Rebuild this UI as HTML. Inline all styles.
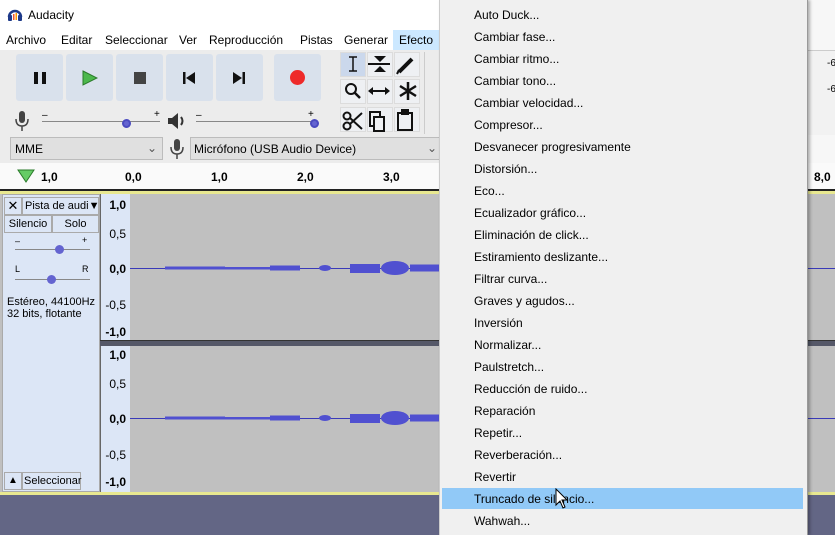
<!DOCTYPE html>
<html><head><meta charset="utf-8"><style>
*{margin:0;padding:0;box-sizing:border-box}
body{width:835px;height:535px;overflow:hidden;position:relative;background:#f0f0f0;font-family:"Liberation Sans",sans-serif;font-size:12px;color:#000}
.a{position:absolute}
.btn{position:absolute;top:54px;width:47px;height:47px;background:#d9e1ec;border-radius:3px}
.mi{position:absolute;left:474px;font-size:12px;color:#000}
.tool{position:absolute;width:26px;height:25px;background:#eef0f3;border:1px solid #dcdcdc}
.sc{position:absolute;left:100px;width:30px;text-align:right;padding-right:4px;font-size:12px}
</style></head><body>
<div class="a" style="left:0;top:0;width:835px;height:30px;background:#fff"></div>
<svg class="a" style="left:7px;top:7px" width="16" height="14"><path d="M2 10 A6 6 0 0 1 14 10" fill="none" stroke="#1e3a8a" stroke-width="2.5"/><rect x="1" y="8" width="4" height="6" rx="1" fill="#1e3a8a"/><rect x="11" y="8" width="4" height="6" rx="1" fill="#1e3a8a"/><rect x="6" y="7" width="1.5" height="6" fill="#e53"/><rect x="8.5" y="6" width="1.5" height="7" fill="#f90"/></svg>
<div class="a" style="left:28px;top:8px;font-size:12px">Audacity</div>
<div class="a" style="left:0;top:30px;width:440px;height:20px;background:#fff"></div>
<div class="a" style="left:393px;top:30px;width:46px;height:20px;background:#cce8ff"></div>
<div class="a" style="left:6px;top:33px">Archivo</div>
<div class="a" style="left:61px;top:33px">Editar</div>
<div class="a" style="left:105px;top:33px">Seleccionar</div>
<div class="a" style="left:179px;top:33px">Ver</div>
<div class="a" style="left:209px;top:33px">Reproducción</div>
<div class="a" style="left:300px;top:33px">Pistas</div>
<div class="a" style="left:344px;top:33px">Generar</div>
<div class="a" style="left:399px;top:33px">Efecto</div>
<div class="a" style="left:0;top:50px;width:440px;height:113px;background:#ececec"></div>
<div class="btn" style="left:16px"></div><div class="btn" style="left:66px"></div><div class="btn" style="left:116px"></div><div class="btn" style="left:166px"></div><div class="btn" style="left:216px"></div><div class="btn" style="left:274px"></div>
<div class="a" style="left:34px;top:72px;width:4px;height:12px;background:#111"></div><div class="a" style="left:42px;top:72px;width:4px;height:12px;background:#111"></div>
<svg class="a" style="left:82px;top:70px" width="16" height="16"><path d="M1 1 L15 8 L1 15Z" fill="#4cb84c" stroke="#2a7a2a"/></svg>
<div class="a" style="left:134px;top:72px;width:12px;height:12px;background:#444"></div>
<svg class="a" style="left:182px;top:71px" width="14" height="14"><rect x="1" y="1" width="2.5" height="12" fill="#111"/><path d="M13 1 L4 7 L13 13Z" fill="#111"/></svg>
<svg class="a" style="left:232px;top:71px" width="14" height="14"><path d="M1 1 L10 7 L1 13Z" fill="#111"/><rect x="10.5" y="1" width="2.5" height="12" fill="#111"/></svg>
<div class="a" style="left:290px;top:70px;width:15px;height:15px;border-radius:50%;background:#ee2a2a"></div>
<div class="tool" style="left:340px;top:52px;background:#cbd8ec"></div><div class="tool" style="left:367px;top:52px"></div><div class="tool" style="left:394px;top:52px"></div>
<div class="tool" style="left:340px;top:79px"></div><div class="tool" style="left:367px;top:79px"></div><div class="tool" style="left:394px;top:79px"></div>
<div class="tool" style="left:340px;top:107px"></div><div class="tool" style="left:367px;top:107px"></div><div class="tool" style="left:394px;top:107px"></div>
<svg class="a" style="left:340px;top:52px" width="84" height="82" fill="none" stroke="#111" stroke-width="2">
<path d="M13 5 V19 M9 5 H17 M9 19 H17" stroke-width="1.5"/>
<path d="M28 12 H50" /><path d="M34 4 L46 4 L40 10Z M34 20 L46 20 L40 14Z" fill="#111" stroke="none"/>
<path d="M59 20 L72 7" stroke-width="4"/><path d="M57 22 L59 18" stroke-width="2"/>
<circle cx="11" cy="37" r="5"/><path d="M15 41 L20 46" stroke-width="2.5"/>
<path d="M30 39 H48"/><path d="M28 39 L33 35 L33 43Z M50 39 L45 35 L45 43Z" fill="#111" stroke="none"/>
<path d="M68 30 V48 M60 34 L76 44 M60 44 L76 34" stroke-width="2.5"/>
<circle cx="7" cy="74" r="3.5"/><circle cx="7" cy="64" r="3.5"/><path d="M10 72 L22 61 M10 66 L22 77" stroke-width="2"/>
<rect x="30" y="60" width="10" height="14"/><rect x="34" y="65" width="10" height="14" fill="#eef0f3"/>
<rect x="58" y="61" width="14" height="17"/><rect x="62" y="58" width="6" height="4" fill="#111"/>
</svg>
<div class="a" style="left:424px;top:52px;width:16px;height:82px;background:#ececec;border-left:1px solid #ccc"></div>
<svg class="a" style="left:14px;top:110px" width="16" height="22"><rect x="5" y="1" width="6" height="12" rx="3" fill="#444"/><path d="M2 9 Q2 16 8 16 Q14 16 14 9 M8 16 V21" fill="none" stroke="#444" stroke-width="1.5"/></svg>
<div class="a" style="left:42px;top:121px;width:118px;height:1px;background:#888"></div>
<div class="a" style="left:42px;top:110px;font-size:10px">–</div><div class="a" style="left:154px;top:109px;font-size:10px">+</div>
<div class="a" style="left:122px;top:119px;width:9px;height:9px;border-radius:50%;background:#6464d0;border:2px solid #4a4ac0"></div>
<svg class="a" style="left:167px;top:112px" width="20" height="18"><path d="M1 6 H5 L11 1 V17 L5 12 H1Z" fill="#333"/><path d="M14 5 Q17 9 14 13" stroke="#333" stroke-width="2" fill="none"/></svg>
<div class="a" style="left:196px;top:121px;width:118px;height:1px;background:#888"></div>
<div class="a" style="left:196px;top:110px;font-size:10px">–</div><div class="a" style="left:308px;top:109px;font-size:10px">+</div>
<div class="a" style="left:310px;top:119px;width:9px;height:9px;border-radius:50%;background:#6464d0;border:2px solid #4a4ac0"></div>
<div class="a" style="left:0;top:135px;width:440px;height:28px;background:#ececec"></div>
<div class="a" style="left:10px;top:137px;width:153px;height:23px;background:#e0e0e0;border:1px solid #bcbcbc;padding:4px 4px;font-size:12px">MME<span style="position:absolute;right:5px;top:3px;color:#555">⌄</span></div>
<svg class="a" style="left:170px;top:138px" width="14" height="22"><rect x="4" y="1" width="6" height="12" rx="3" fill="#444"/><path d="M1 9 Q1 16 7 16 Q13 16 13 9 M7 16 V21" fill="none" stroke="#444" stroke-width="1.5"/></svg>
<div class="a" style="left:190px;top:137px;width:250px;height:23px;background:#e0e0e0;border:1px solid #bcbcbc;padding:4px 3px;font-size:12px">Micrófono (USB Audio Device)<span style="position:absolute;right:2px;top:3px;color:#555">⌄</span></div>
<div class="a" style="left:0;top:163px;width:835px;height:28px;background:#fafafa;border-bottom:2px solid #222"></div>
<svg class="a" style="left:17px;top:169px" width="18" height="14"><path d="M1 1 H17 L9 13Z" fill="#6c6" stroke="#2a7a2a"/></svg>
<div class="a" style="left:41px;top:170px;font-weight:bold;font-size:12px">1,0</div>
<div class="a" style="left:125px;top:170px;font-weight:bold">0,0</div>
<div class="a" style="left:211px;top:170px;font-weight:bold">1,0</div>
<div class="a" style="left:297px;top:170px;font-weight:bold">2,0</div>
<div class="a" style="left:383px;top:170px;font-weight:bold">3,0</div>
<div class="a" style="left:814px;top:170px;font-weight:bold">8,0</div>
<div class="a" style="left:0;top:191px;width:835px;height:3px;background:#e8e890"></div>
<div class="a" style="left:0;top:194px;width:835px;height:300px;background:#c0c0c0"></div>
<div class="a" style="left:2px;top:194px;width:98px;height:298px;background:#dce6f6;border:1px solid #aaa"></div>
<div class="a" style="left:100px;top:194px;width:30px;height:298px;background:#dce6f6;border-left:1px solid #666"></div>
<div class="a" style="left:4px;top:197px;width:18px;height:18px;border:1px solid #aaa;text-align:center;font-size:13px;line-height:16px">✕</div>
<div class="a" style="left:22px;top:197px;width:77px;height:18px;border:1px solid #aaa;font-size:11px;padding:2px 2px;overflow:hidden;white-space:nowrap">Pista de audi▼</div>
<div class="a" style="left:4px;top:215px;width:48px;height:18px;border:1px solid #aaa;font-size:11px;text-align:center;padding-top:2px">Silencio</div>
<div class="a" style="left:52px;top:215px;width:47px;height:18px;border:1px solid #aaa;font-size:11px;text-align:center;padding-top:2px">Solo</div>
<div class="a" style="left:15px;top:249px;width:75px;height:1px;background:#888"></div>
<div class="a" style="left:55px;top:245px;width:9px;height:9px;border-radius:50%;background:#6464d0"></div>
<div class="a" style="left:15px;top:236px;font-size:9px">–</div><div class="a" style="left:82px;top:235px;font-size:9px">+</div>
<div class="a" style="left:15px;top:279px;width:75px;height:1px;background:#888"></div>
<div class="a" style="left:47px;top:275px;width:9px;height:9px;border-radius:50%;background:#6464d0"></div>
<div class="a" style="left:15px;top:264px;font-size:9px">L</div><div class="a" style="left:82px;top:264px;font-size:9px">R</div>
<div class="a" style="left:7px;top:296px;font-size:11px;line-height:12px">Estéreo, 44100Hz<br>32 bits, flotante</div>
<div class="a" style="left:4px;top:472px;width:18px;height:18px;border:1px solid #aaa;font-size:10px;text-align:center;line-height:16px">▲</div>
<div class="a" style="left:22px;top:472px;width:59px;height:18px;border:1px solid #aaa;font-size:11px;padding:2px 1px">Seleccionar</div>
<div class="sc" style="top:198px;font-weight:bold">1,0</div>
<div class="sc" style="top:227px">0,5</div>
<div class="sc" style="top:262px;font-weight:bold">0,0</div>
<div class="sc" style="top:298px">-0,5</div>
<div class="sc" style="top:325px;font-weight:bold">-1,0</div>
<div class="sc" style="top:348px;font-weight:bold">1,0</div>
<div class="sc" style="top:377px">0,5</div>
<div class="sc" style="top:412px;font-weight:bold">0,0</div>
<div class="sc" style="top:448px">-0,5</div>
<div class="sc" style="top:475px;font-weight:bold">-1,0</div>
<div class="a" style="left:100px;top:340px;width:735px;height:6px;background:#555868;border-top:1px solid #333"></div>
<div class="a" style="left:130px;top:268px;width:705px;height:1px;background:#3a3ab8"></div>
<div class="a" style="left:130px;top:418px;width:705px;height:1px;background:#3a3ab8"></div>
<svg class="a" style="left:130px;top:255px" width="310" height="180" fill="#5050d0">
<g id="w"><rect x="35" y="11.5" width="60" height="3"/><rect x="95" y="12" width="60" height="2.5"/><rect x="140" y="10.5" width="30" height="5"/><ellipse cx="195" cy="13" rx="6" ry="3"/><rect x="220" y="9" width="30" height="9"/><ellipse cx="265" cy="13" rx="14" ry="7"/><rect x="280" y="9.5" width="30" height="7"/></g>
<use href="#w" y="150"/>
</svg>
<div class="a" style="left:0;top:492px;width:835px;height:3px;background:#e8e890"></div>
<div class="a" style="left:0;top:495px;width:835px;height:40px;background:#636685"></div>
<div class="a" style="left:807px;top:0;width:28px;height:163px;background:#f7f7f7"></div>
<div class="a" style="left:807px;top:50px;width:28px;height:85px;background:#f2f2f2;border-top:1px solid #ccc"></div>
<div class="a" style="left:827px;top:58px;font-size:10px">-6</div><div class="a" style="left:827px;top:84px;font-size:10px">-6</div>
<div class="a" style="left:439px;top:0;width:369px;height:535px;background:#f0f0f0;border-left:1px solid #ccc;border-right:1px solid #999;box-shadow:2px 0 3px rgba(0,0,0,.3)"></div>
<div class="a" style="left:442px;top:488px;width:361px;height:21px;background:#91c9f7"></div>
<div class="mi" style="top:8px">Auto Duck...</div>
<div class="mi" style="top:30px">Cambiar fase...</div>
<div class="mi" style="top:52px">Cambiar ritmo...</div>
<div class="mi" style="top:74px">Cambiar tono...</div>
<div class="mi" style="top:96px">Cambiar velocidad...</div>
<div class="mi" style="top:118px">Compresor...</div>
<div class="mi" style="top:140px">Desvanecer progresivamente</div>
<div class="mi" style="top:162px">Distorsión...</div>
<div class="mi" style="top:184px">Eco...</div>
<div class="mi" style="top:206px">Ecualizador gráfico...</div>
<div class="mi" style="top:228px">Eliminación de click...</div>
<div class="mi" style="top:250px">Estiramiento deslizante...</div>
<div class="mi" style="top:272px">Filtrar curva...</div>
<div class="mi" style="top:294px">Graves y agudos...</div>
<div class="mi" style="top:316px">Inversión</div>
<div class="mi" style="top:338px">Normalizar...</div>
<div class="mi" style="top:360px">Paulstretch...</div>
<div class="mi" style="top:382px">Reducción de ruido...</div>
<div class="mi" style="top:404px">Reparación</div>
<div class="mi" style="top:426px">Repetir...</div>
<div class="mi" style="top:448px">Reverberación...</div>
<div class="mi" style="top:470px">Revertir</div>
<div class="mi" style="top:492px">Truncado de silencio...</div>
<div class="mi" style="top:514px">Wahwah...</div>
<svg class="a" style="left:555px;top:488px" width="14" height="22"><path d="M1 1 V17 L5 13 L8 20 L10 19 L7 12 L12 12Z" fill="#fff" stroke="#000"/></svg>
</body></html>
